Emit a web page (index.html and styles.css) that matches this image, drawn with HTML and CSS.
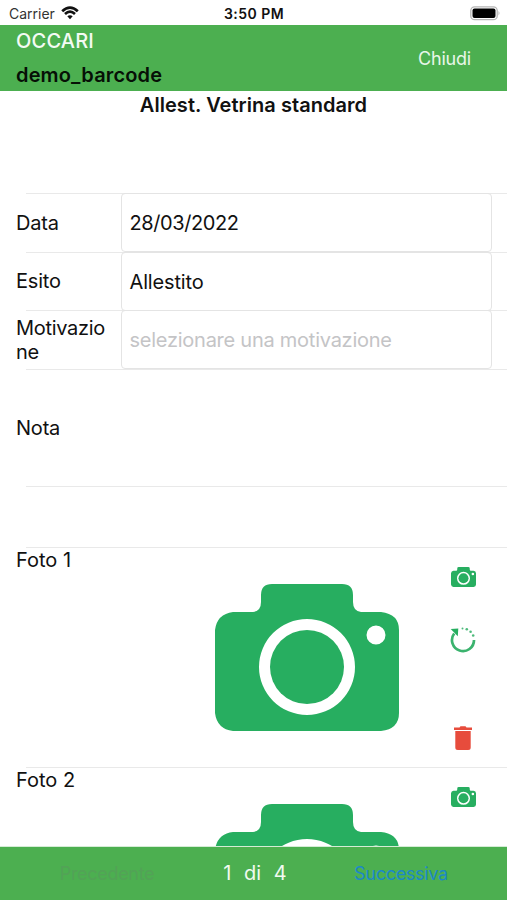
FILE: index.html
```
<!DOCTYPE html>
<html lang="it">
<head>
    <meta charset="UTF-8">
    <meta name="viewport" content="width=device-width, initial-scale=1.0">
    <title>Allest. Vetrina standard</title>
    <link rel="stylesheet" href="styles.css">
</head>
<body>
    <!-- Shared camera shape, used by the previews and the small buttons -->
    <svg class="defs" width="0" height="0">
        <symbol id="camera" viewBox="0 0 184 147">
            <path fill="#27ae60" fill-rule="evenodd" d="M18 28H38Q46 27 46 18V11Q46 0 57 0H127Q138 0 138 11V18Q138 27 146 28H166Q184 30 184 46V129Q184 145 166 147H18Q2 145 0 129V46Q2 30 18 28ZM92 35A48 48 0 1 0 92 131A48 48 0 1 0 92 35ZM161 41.500A9.500 9.500 0 1 0 161 60.500A9.500 9.500 0 1 0 161 41.500Z"/>
            <circle cx="92" cy="83" r="37" fill="#27ae60"/>
        </symbol>
    </svg>

    <div class="screen">
        <div class="status-bar">
            <div class="carrier">
                <span>Carrier</span>
                <svg class="wifi" width="18" height="14" viewBox="0 0 18 14">
                    <path d="M1.200 5.200Q9-2 16.800 5.200" />
                    <path d="M4 8Q9 3.400 14 8" />
                    <path class="wifi-dot" d="M6.300 10.300Q9 8 11.700 10.300L9 13.200Z" />
                </svg>
            </div>
            <span class="time">3:50 PM</span>
            <div class="battery-wrap">
                <svg width="31" height="15" viewBox="0 0 31 15">
                    <rect x="0.800" y="0.800" width="26.400" height="12.900" rx="3.800" fill="#fff" stroke="#b5b5b5" stroke-width="1.300"/>
                    <rect x="2.500" y="2.500" width="23" height="9.500" rx="2" fill="#000"/>
                    <path d="M28.500 5Q30.500 7.200 28.500 9.500Z" fill="#b5b5b5"/>
                </svg>
            </div>
        </div>

        <header class="header">
            <div class="customer">
                <div class="customer-name">OCCARI</div>
                <div class="customer-user">demo_barcode</div>
            </div>
            <a class="close">Chiudi</a>
        </header>

        <main class="content">
            <h1>Allest. Vetrina standard</h1>

            <div class="line"></div>
            <div class="row">
                <label>Data</label>
                <div class="field date">28/03/2022</div>
            </div>
            <div class="line"></div>
            <div class="row">
                <label>Esito</label>
                <div class="field">Allestito</div>
            </div>
            <div class="line"></div>
            <div class="row">
                <label class="label-long">Motivazione</label>
                <div class="field placeholder">selezionare una motivazione</div>
            </div>
            <div class="line"></div>
            <div class="row note">
                <label>Nota</label>
            </div>
            <div class="line"></div>

            <div class="photos">
                <div class="line"></div>
                <div class="photo">
                    <label>Foto 1</label>
                    <svg class="preview"><use href="#camera"/></svg>
                    <div class="actions">
                        <svg class="shoot"><use href="#camera"/></svg>
                        <svg class="rotate" viewBox="0 0 26 26">
                            <path d="M4.200 6.500A11 11 0 1 0 24 13" fill="none" stroke="#3bb36e" stroke-width="2.700"/>
                            <path d="M0.700 2L8.300 1.400L7.800 9.300Z" fill="#27ae60"/>
                            <g fill="#4dba7b">
                                <circle cx="12.500" cy="1.500" r="1"/>
                                <circle cx="16.800" cy="2.300" r="1.300"/>
                                <circle cx="20.600" cy="4.800" r="1.300"/>
                                <circle cx="23.200" cy="8.500" r="1.300"/>
                            </g>
                        </svg>
                        <svg class="delete" viewBox="0 0 18 24">
                            <path d="M0 1.500H5.500L6.500 0.300H11.500L12.500 1.500H18V4H0ZM1.300 5H16.700V21.500Q16.700 24 14.200 24H3.800Q1.300 24 1.300 21.500Z" fill="#e74c3c"/>
                        </svg>
                    </div>
                </div>
                <div class="line"></div>
                <div class="photo">
                    <label>Foto 2</label>
                    <svg class="preview"><use href="#camera"/></svg>
                    <div class="actions">
                        <svg class="shoot"><use href="#camera"/></svg>
                    </div>
                </div>
            </div>
        </main>

        <footer class="pager">
            <span class="prev">Precedente</span>
            <span class="count">1 di 4</span>
            <span class="next">Successiva</span>
        </footer>
    </div>
</body>
</html>
```

FILE: styles.css
```
* {
    box-sizing: border-box;
}

body {
    margin: 0;
    background-color: #fff;
    color: #111;
    font-family: Inter, "Liberation Sans", sans-serif;
    font-size: 20px;
    line-height: 24px;
}

svg {
    display: block;
}

.defs {
    position: absolute;
}

.screen {
    display: flex;
    flex-direction: column;
    width: 507px;
    height: 900px;
    overflow: hidden;
}

/* status bar */
.status-bar {
    display: grid;
    grid-template-columns: 1fr auto 1fr;
    align-items: center;
    flex: none;
    height: 25px;
    padding: 2px 6px 0 9px;
    font-size: 14px;
}

.carrier {
    display: flex;
    align-items: center;
    gap: 6px;
    color: #333;
}

.wifi {
    margin-top: -2px;
    fill: none;
    stroke: #111;
    stroke-width: 2.700;
}

.wifi .wifi-dot {
    fill: #111;
    stroke: none;
}

.time {
    margin-right: 2px;
    font-weight: 600;
    letter-spacing: 0.450px;
}

.battery-wrap {
    display: flex;
    justify-content: flex-end;
    margin-top: -2px;
}

/* header */
.header {
    display: flex;
    justify-content: space-between;
    flex: none;
    height: 66px;
    padding: 4px 36px 0 16px;
    background-color: #4caf50;
}

.customer-name {
    color: #f4fbf4;
    font-weight: 500;
    letter-spacing: 0.200px;
}

.customer-user {
    margin-top: 10px;
    color: #061006;
    font-weight: 600;
    letter-spacing: 0.150px;
}

.close {
    margin-top: 18px;
    color: #e8f6e8;
    font-size: 18px;
    letter-spacing: -0.200px;
}

/* form */
.content {
    flex: 1;
    min-height: 0;
    overflow: hidden;
}

h1 {
    height: 102px;
    margin: 0;
    padding-top: 2px;
    font-size: 20px;
    font-weight: 600;
    letter-spacing: 0.050px;
    text-align: center;
}

.line {
    height: 1px;
    margin-left: 26px;
    background-color: #e9e9e9;
}

.row {
    display: flex;
    align-items: center;
    height: 57.500px;
    padding-right: 15px;
    padding-left: 16px;
}

.row label {
    flex: none;
    width: 104.500px;
    letter-spacing: -0.200px;
}

.row .label-long {
    padding-right: 13px;
    letter-spacing: -0.300px;
    word-break: break-all;
}

.field {
    flex: 1;
    height: 59px;
    padding: 17px 8px;
    border: 1px solid #e4e4e4;
    border-radius: 4px;
    letter-spacing: -0.150px;
}

.date {
    letter-spacing: -0.400px;
}

.placeholder {
    color: #c4c4c6;
    letter-spacing: -0.250px;
}

.note {
    height: 116px;
}

/* photos */
.photos {
    margin-top: 60px;
}

.photo {
    display: grid;
    grid-template-columns: 199px 184px 1fr;
    height: 219px;
    padding-left: 16px;
}

.preview {
    width: 184px;
    height: 147px;
    margin-top: 36px;
}

.actions {
    display: flex;
    flex-direction: column;
    align-items: center;
    padding: 19px 0 0 20px;
}

.shoot {
    width: 25px;
    height: 20px;
}

.rotate {
    width: 26px;
    height: 26px;
    margin-top: 40px;
}

.delete {
    width: 18px;
    height: 24px;
    margin-top: 73px;
}

/* pager */
.pager {
    display: grid;
    grid-template-columns: 214px 82px 211px;
    align-items: center;
    flex: none;
    height: 54px;
    border-top: 1px solid #d5ecd6;
    background-color: #4caf50;
    font-size: 18px;
    letter-spacing: -0.300px;
    text-align: center;
}

.prev {
    color: #53a257;
}

.count {
    padding-bottom: 2px;
    color: #f1faf1;
    font-size: 20px;
    letter-spacing: 0;
    word-spacing: 7px;
}

.next {
    margin-left: -1px;
    color: #1c88c8;
}
```
